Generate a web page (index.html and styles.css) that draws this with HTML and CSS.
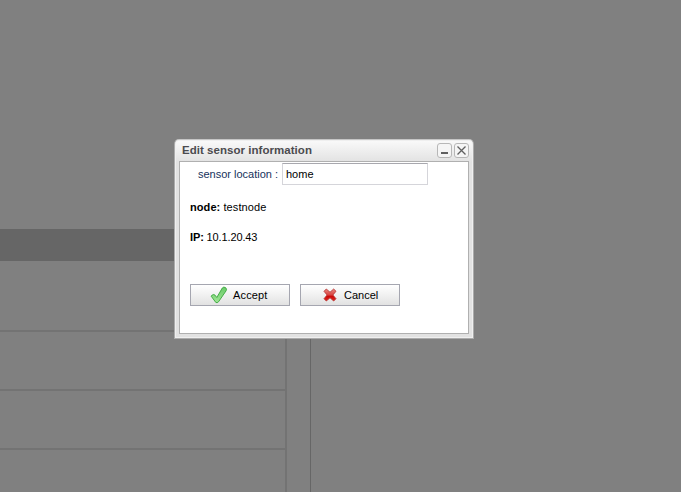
FILE: index.html
```html
<!DOCTYPE html>
<html lang="en">
<head>
<meta charset="utf-8">
<title>Sensors</title>
<link rel="stylesheet" href="styles.css">
</head>
<body>
<div class="page">
  <div class="panel">
    <div class="panel-head"></div>
    <div class="grid">
      <div class="row"></div>
      <div class="row"></div>
      <div class="row"></div>
      <div class="row"></div>
    </div>
  </div>
</div>
<div class="window" role="dialog">
  <div class="title-bar">
    <span class="title">Edit sensor information</span>
    <button class="tool" aria-label="Minimize"><svg width="13" height="13" viewBox="0 0 13 13"><path d="M3 9h7" stroke="#606060" stroke-width="2"/></svg></button>
    <button class="tool" aria-label="Close"><svg width="13" height="13" viewBox="0 0 13 13"><path d="M2.500 2.500l8 8M10.500 2.500l-8 8" stroke="#606060" stroke-width="1.300"/></svg></button>
  </div>
  <div class="content">
    <div class="field">
      <label for="location">sensor location :</label>
      <input id="location" type="text" value="home">
    </div>
    <p class="info node"><b>node:</b> <span>testnode</span></p>
    <p class="info ip"><b>IP:</b> <span>10.1.20.43</span></p>
    <div class="actions">
      <button class="btn accept">
        <svg width="18" height="18" viewBox="0 0 18 18"><defs><linearGradient id="g" x2="0" y2="1"><stop stop-color="#69c968"/><stop offset="1" stop-color="#a0e695"/></linearGradient></defs><path d="M1.200 10.200l1-1.200 1.500-.5 1.400.7 1.700 2.300L12.300 2l1.500-.9 1.900.6.800 1.500-.4 1.600-7.600 11-1.400.9-1.300-.3z" fill="url(#g)" stroke="#38a63a" stroke-width=".9" stroke-linejoin="round"/></svg>
        <span>Accept</span>
      </button>
      <button class="btn cancel">
        <svg width="14" height="14" viewBox="0 0 14 14"><defs><linearGradient id="r" x2="0" y2="1"><stop stop-color="#e88680"/><stop offset=".5" stop-color="#d94440"/><stop offset=".6" stop-color="#cc0808"/><stop offset="1" stop-color="#dc2a22"/></linearGradient></defs><path d="M3.300 1L7 4.200 10.700 1 13 3.300 9.900 7l3.100 3.700-2.300 2.300L7 9.800 3.300 13 1 10.700 4.100 7 1 3.300z" fill="url(#r)" stroke="#b52f2d" stroke-width=".8" stroke-linejoin="round"/></svg>
        <span>Cancel</span>
      </button>
    </div>
  </div>
</div>
</body>
</html>
```
FILE: styles.css
```css
* { box-sizing: border-box; }
body {
  margin: 0;
  height: 492px;
  overflow: hidden;
  background: #808080;
  font: 11px/14px "Liberation Sans", Arial, sans-serif;
  color: #000;
}
.page { height: 492px; padding-top: 229px; }
.panel {
  width: 311px;
  height: 263px;
}
.panel-head { height: 32px; background: #666; }
.grid {
  height: 231px;
  padding-right: 23px;
  border-right: 1px solid #666;
}
.row {
  height: 59px;
  border-right: 2px solid #737373;
  border-bottom: 2px solid #737373;
}
.row:first-child { height: 71px; }
.window {
  position: absolute;
  left: 174px;
  top: 139px;
  width: 300px;
  height: 200px;
  padding: 0 4px 4px;
  display: flex;
  flex-direction: column;
  border: 1px solid #ababab;
  border-top-color: #c6c6c6;
  border-radius: 5px 5px 0 0;
  background: linear-gradient(#fafafa, #e2e2e2 22px);
  box-shadow: inset 0 0 0 1px #efefef;
}
.title-bar {
  flex: 0 0 21px;
  display: flex;
  align-items: center;
  padding: 0 0 0 3px;
}
.title {
  flex: 1;
  padding-bottom: 2px;
  font-size: 11.5px;
  font-weight: bold;
  letter-spacing: .04px;
  color: #4b4b4f;
}
.tool {
  width: 15px;
  height: 15px;
  margin-left: 2px;
  padding: 0;
  display: grid;
  place-items: center;
  border: 1px solid #b7b7b7;
  border-radius: 3px;
  background: #f5f5f5;
}
.content {
  flex: 1;
  padding: 1px 10px 0;
  border: 1px solid #b0b0b0;
  background: #fff;
}
.field { display: flex; align-items: center; }
.field label {
  width: 88px;
  margin-right: 4px;
  text-align: right;
  white-space: nowrap;
  color: #16325c;
}
.field input {
  width: 146px;
  height: 22px;
  padding: 0 3px;
  border: 1px solid #d5d5da;
  border-top-color: #a8a8ae;
  font: inherit;
  outline: 0;
}
.info { margin: 15px 0 0; }
.info + .info { margin-top: 16px; }
.node { letter-spacing: .08px; }
.ip { letter-spacing: -.13px; }
.actions { display: flex; gap: 10px; margin-top: 40px; }
.btn {
  width: 100px;
  height: 22px;
  padding: 0;
  display: flex;
  align-items: center;
  border: 1px solid #a5a6b0;
  background: linear-gradient(#fff, #e2e2e2);
  color: #000;
  font: inherit;
}
.accept { gap: 5px; padding-left: 19px; letter-spacing: .15px; }
.cancel { gap: 7px; padding-left: 22px; }
```
